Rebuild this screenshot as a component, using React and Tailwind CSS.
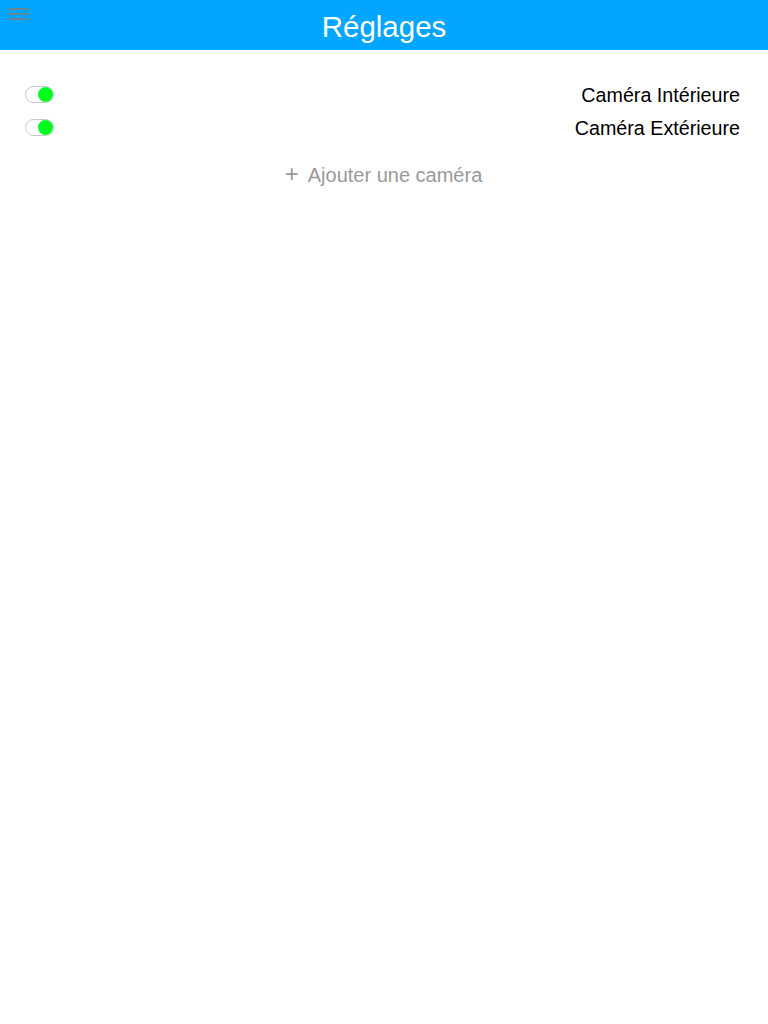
import React from "react";

function Toggle() {
  return (
    <div className="relative w-[29px] h-[17px]">
      <div className="absolute left-0 top-0 w-[29px] h-[17px] rounded-full border border-[#c8c8c8] bg-white" />
      <div className="absolute right-[1px] top-[1px] w-[15px] h-[15px] rounded-full bg-[#00ff1e]" />
    </div>
  );
}

export default function App() {
  const cams = ["Caméra Intérieure", "Caméra Extérieure"];
  return (
    <div className="w-[768px] h-[1024px] bg-white" style={{ fontFamily: '"Liberation Sans", Arial, sans-serif' }}>
      <div className="relative h-[50px] bg-[#00a6ff] flex items-center justify-center">
        <div className="absolute left-[8px] top-[8px] w-[21px]">
          <div className="mt-0 h-[2px] bg-[#7f7f7f] opacity-80" />
          <div className="mt-[3px] h-[2px] bg-[#7f7f7f] opacity-80" />
          <div className="mt-[3px] h-[2px] bg-[#7f7f7f] opacity-80" />
        </div>
        <span className="text-white text-[29.5px] leading-none mt-[3px]">Réglages</span>
      </div>
      <div className="pt-[28px] pl-[25px] pr-[28px]">
        {cams.map((c) => (
          <div key={c} className="h-[33px] flex items-center justify-between">
            <Toggle />
            <span className="text-[19.7px] text-black mt-[2px]">{c}</span>
          </div>
        ))}
        <div className="mt-[15px] flex items-center justify-center gap-[9px] text-[#9a9a9a] text-[20px] h-[32px] pl-[2px]">
          <span className="text-[24px] font-light leading-none -mt-[3px]">+</span>
          <span>Ajouter une caméra</span>
        </div>
      </div>
    </div>
  );
}
